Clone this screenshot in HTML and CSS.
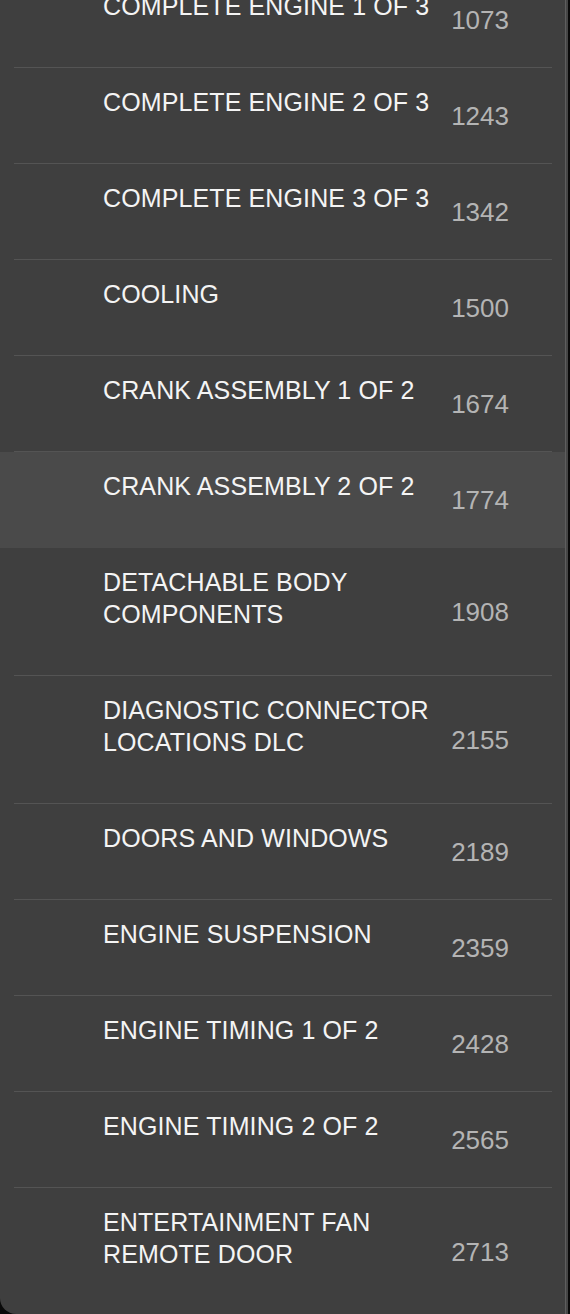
FILE: index.html
```html
<!DOCTYPE html>
<html lang="en">
<head>
<meta charset="utf-8">
<title>Sections</title>
<link rel="stylesheet" href="styles.css">
</head>
<body>
<div class="window">
  <div class="panel">
    <ul class="list">
      <li class="row"><div class="row-inner"><span class="title">COMPLETE ENGINE 1 OF 3</span><span class="num">1073</span></div></li>
      <li class="row"><div class="row-inner"><span class="title">COMPLETE ENGINE 2 OF 3</span><span class="num">1243</span></div></li>
      <li class="row"><div class="row-inner"><span class="title">COMPLETE ENGINE 3 OF 3</span><span class="num">1342</span></div></li>
      <li class="row"><div class="row-inner"><span class="title">COOLING</span><span class="num">1500</span></div></li>
      <li class="row"><div class="row-inner"><span class="title">CRANK ASSEMBLY 1 OF 2</span><span class="num">1674</span></div></li>
      <li class="row row-selected"><div class="row-inner"><span class="title">CRANK ASSEMBLY 2 OF 2</span><span class="num">1774</span></div></li>
      <li class="row"><div class="row-inner"><span class="title">DETACHABLE BODY<br>COMPONENTS</span><span class="num">1908</span></div></li>
      <li class="row"><div class="row-inner"><span class="title">DIAGNOSTIC CONNECTOR<br>LOCATIONS DLC</span><span class="num">2155</span></div></li>
      <li class="row"><div class="row-inner"><span class="title">DOORS AND WINDOWS</span><span class="num">2189</span></div></li>
      <li class="row"><div class="row-inner"><span class="title">ENGINE SUSPENSION</span><span class="num">2359</span></div></li>
      <li class="row"><div class="row-inner"><span class="title">ENGINE TIMING 1 OF 2</span><span class="num">2428</span></div></li>
      <li class="row"><div class="row-inner"><span class="title">ENGINE TIMING 2 OF 2</span><span class="num">2565</span></div></li>
      <li class="row"><div class="row-inner"><span class="title">ENTERTAINMENT FAN<br>REMOTE DOOR</span><span class="num">2713</span></div></li>
    </ul>
  </div>
  <div class="edge-light"></div>
  <div class="edge-mid"></div>
</div>
</body>
</html>
```

FILE: styles.css
```css
html, body {
  margin: 0;
  padding: 0;
  background: #0b0b12;
}

.window {
  width: 570px;
  height: 1314px;
  display: flex;
  overflow: hidden;
  background: #0a0a0a;
}

.panel {
  width: 565px;
  height: 1314px;
  flex: none;
  background: #3f3f3f;
  border-bottom-left-radius: 16px;
  overflow: hidden;
}

.edge-light {
  width: 1px;
  flex: none;
  background: #5e5e5e;
}

.edge-mid {
  width: 2px;
  flex: none;
  background: #464646;
}

.list {
  list-style: none;
  margin: -28px 0 0 0;
  padding: 0;
}

.row {
  font-family: "Liberation Sans", Arial, sans-serif;
}

.row-selected {
  background: #4a4a4a;
}

.row-inner {
  margin: 0 13px 0 14px;
  padding: 0 43px 0 89px;
  border-bottom: 1px solid #545454;
  display: grid;
  grid-template-columns: 1fr auto;
  align-items: center;
}

.row-selected .row-inner {
  border-bottom-color: #4a4a4a;
}

.title {
  align-self: start;
  padding: 18px 0 45px 0;
  font-size: 25px;
  line-height: 32px;
  color: #f4f4f4;
  letter-spacing: 0.12px;
}

.num {
  font-size: 26px;
  line-height: 32px;
  color: #b4b4b4;
  text-align: right;
}
```
